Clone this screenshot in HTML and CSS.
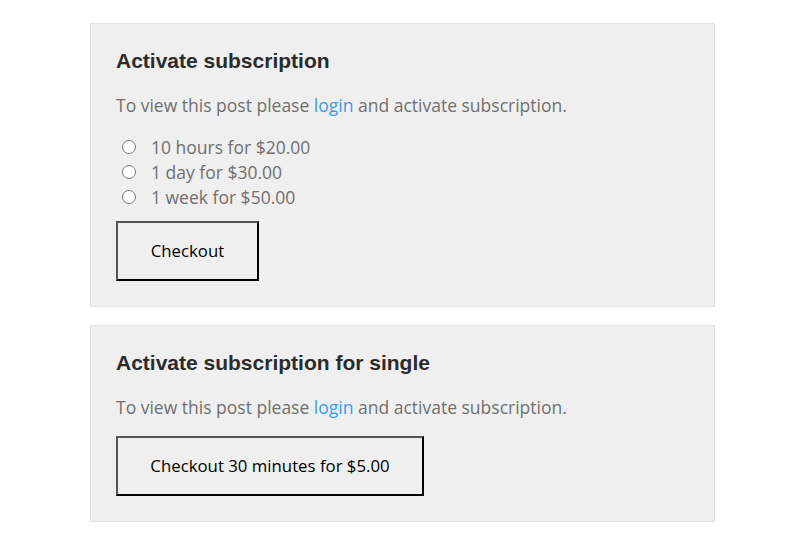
FILE: index.html
```html
<!DOCTYPE html>
<html>
<head>
<meta charset="utf-8">
<link rel="stylesheet" href="styles.css">
</head>
<body>
<div class="page">
  <section class="box">
    <h3 class="title">Activate subscription</h3>
    <p class="note">To view this post please <a href="#" class="link">login</a> and activate subscription.</p>
    <ul class="options">
      <li class="option"><input type="radio" name="plan" class="radio"><span>10 hours for $20.00</span></li>
      <li class="option"><input type="radio" name="plan" class="radio"><span>1 day for $30.00</span></li>
      <li class="option"><input type="radio" name="plan" class="radio"><span>1 week for $50.00</span></li>
    </ul>
    <button class="btn btn-small">Checkout</button>
  </section>
  <section class="box">
    <h3 class="title">Activate subscription for single</h3>
    <p class="note">To view this post please <a href="#" class="link">login</a> and activate subscription.</p>
    <button class="btn btn-wide">Checkout 30 minutes for $5.00</button>
  </section>
</div>
</body>
</html>
```
FILE: styles.css
```css
html, body {
  margin: 0;
  padding: 0;
  background: #ffffff;
}
.page {
  width: 625px;
  margin: 23px 0 0 90px;
  display: flex;
  flex-direction: column;
  gap: 18px;
}
.box {
  background: #efefef;
  border: 1px solid #e2e2e2;
  padding: 25px 25px 25px 25px;
  font-family: "Open Sans", sans-serif;
}
.title {
  margin: 0;
  font-family: "Liberation Sans", Arial, sans-serif;
  font-weight: bold;
  font-size: 21px;
  line-height: 24px;
  color: #2b2b2b;
}
.note {
  margin: 20px 0 0 0;
  font-size: 17.5px;
  line-height: 24px;
  color: #707070;
}
.link {
  color: #3d9be9;
  text-decoration: none;
}
.options {
  list-style: none;
  margin: 17px 0 0 0;
  padding: 0;
}
.option {
  display: flex;
  align-items: center;
  height: 25px;
  font-size: 17.5px;
  color: #707070;
}
.radio {
  margin: 0 15px 0 6px;
  width: 14px;
  height: 14px;
}
.btn {
  display: block;
  box-sizing: border-box;
  height: 60px;
  background: #efefef;
  border: 2px solid;
  border-color: #555555 #000000 #000000 #555555;
  font-family: "Open Sans", sans-serif;
  font-size: 16.8px;
  color: #000000;
  padding: 0 0 2px 0;
  margin-top: 12px;
}
.btn-small {
  width: 143px;
}
.btn-wide {
  width: 308px;
  margin-top: 17px;
}
```
